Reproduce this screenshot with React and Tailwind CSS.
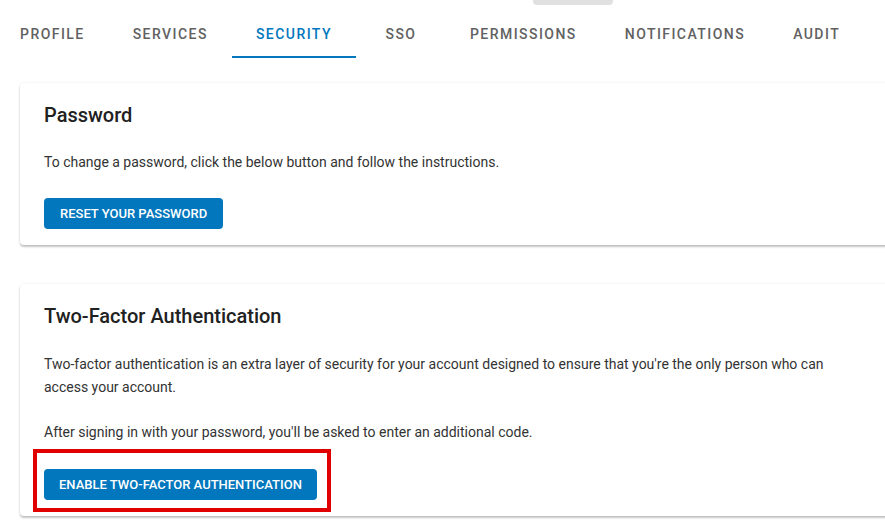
import React from 'react'

const tabs = ['PROFILE', 'SERVICES', 'SECURITY', 'SSO', 'PERMISSIONS', 'NOTIFICATIONS', 'AUDIT']

const Card = ({ title, children }) => (
  <div className="w-[870px] rounded bg-white px-6 pt-4 pb-4 shadow-[0_2px_2px_rgba(0,0,0,0.22),0_0_3px_rgba(0,0,0,0.08)]">
    <h2 className="text-[20px] font-medium leading-8 text-[#212121]">{title}</h2>
    {children}
  </div>
)

const App = () => {
  return (
    <div className="relative h-[529px] w-[885px] overflow-hidden bg-white font-['Roboto',sans-serif]">
      <div className="mx-auto h-[5px] w-20 rounded-b bg-[#e0e0e0] translate-x-[130px]" />

      <nav className="-ml-1 mt-[5px] flex h-12">
        {tabs.map((t) => (
          <div
            key={t}
            className={
              'relative flex min-w-[90px] items-center justify-center px-6 text-sm font-medium tracking-[1.45px] ' +
              (t === 'SECURITY' ? 'text-[#0277bd]' : 'text-[#616161]')
            }
          >
            {t}
            {t === 'SECURITY' && <span className="absolute bottom-0 left-0 h-0.5 w-full bg-[#0277bd]" />}
          </div>
        ))}
      </nav>

      <div className="ml-5 mt-[25px] flex flex-col gap-[39px]">
        <Card title="Password">
          <p className="mt-[21px] text-sm text-[#333]">To change a password, click the below button and follow the instructions.</p>
          <button className="mt-[26px] h-[31px] rounded-sm bg-[#0277bd] px-4 text-[13px] font-medium text-white">
            RESET YOUR PASSWORD
          </button>
        </Card>

        <Card title="Two-Factor Authentication">
          <p className="mt-[21px] text-sm leading-[23px] text-[#333]">
            Two-factor authentication is an extra layer of security for your account designed to ensure that you're the only person who can access your account.
          </p>
          <p className="mt-[22px] text-sm leading-[23px] text-[#333]">After signing in with your password, you'll be asked to enter an additional code.</p>
          <div className="relative mt-[25px] w-fit">
            <button className="h-[31px] rounded-sm bg-[#0277bd] px-[15px] text-[13px] font-medium text-white">
              ENABLE TWO-FACTOR AUTHENTICATION
            </button>
            <span className="pointer-events-none absolute -left-[11px] -right-[14px] -top-[20px] -bottom-[12px] border-4 border-[#e00000]" />
          </div>
        </Card>
      </div>
    </div>
  )
}

export default App
